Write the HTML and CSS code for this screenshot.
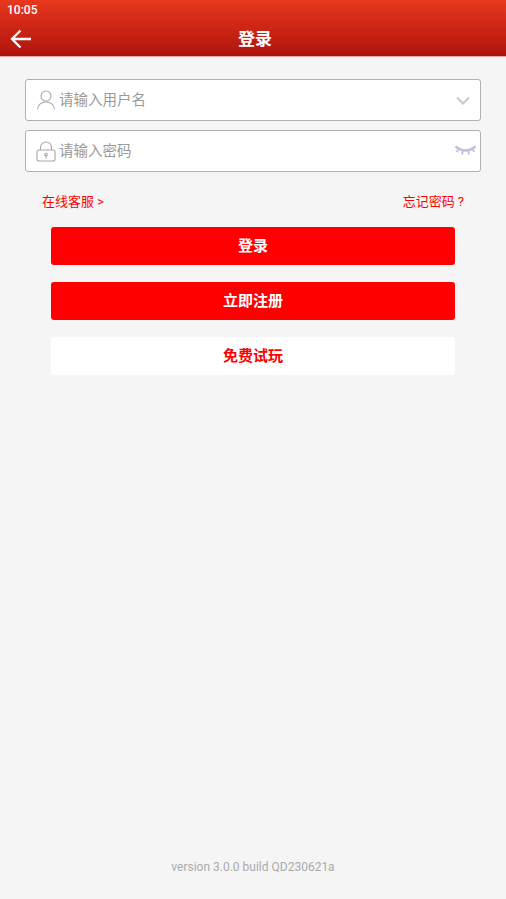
FILE: index.html
```html
<!DOCTYPE html>
<html lang="zh-CN">
<head>
    <meta charset="UTF-8">
    <meta name="viewport" content="width=device-width, initial-scale=1.0">
    <title>登录</title>
    <link rel="stylesheet" href="styles.css">
</head>
<body>
    <header class="topbar">
        <div class="status-time">10:05</div>
        <div class="titlebar">
            <a class="back" href="#" aria-label="返回">
                <svg width="22" height="20" viewBox="0 0 22 20" fill="none" stroke="#fff" stroke-width="2.300">
                    <path d="M21 10H2.500M10.500 1.500L2 10l8.500 8.500"/>
                </svg>
            </a>
            <h1>登录</h1>
        </div>
    </header>

    <main class="login">
        <div class="field">
            <svg class="field-icon" width="20" height="20" viewBox="0 0 20 20" fill="none" stroke="#a8a8a8" stroke-width="1.100">
                <circle cx="10" cy="6" r="5"/>
                <path d="M1.500 19.500c0-4.500 3.500-7.500 8.500-7.500s8.500 3 8.500 7.500"/>
            </svg>
            <input type="text" placeholder="请输入用户名">
            <svg class="arrow" width="14" height="9" viewBox="0 0 14 9" fill="none" stroke="#c8c8c8" stroke-width="2">
                <path d="M1 1.500l6 6 6-6"/>
            </svg>
        </div>
        <div class="field">
            <svg class="field-icon" width="20" height="21" viewBox="0 0 20 21" fill="none" stroke="#a8a8a8" stroke-width="1.100">
                <path d="M4.500 9V6.500a5.500 5.500 0 0 1 11 0V9"/>
                <rect x="1" y="9" width="18" height="11" rx="2"/>
                <circle cx="10" cy="13.500" r="1.300"/>
                <path d="M10 15v2.500"/>
            </svg>
            <input type="password" placeholder="请输入密码">
            <svg class="eye" width="21" height="13" viewBox="0 0 21 13" fill="none" stroke="#c0c0de" stroke-width="2.600">
                <path d="M.5 2.500c3 2.500 6 4 10 4s7-1.500 10-4"/>
                <path stroke-width="1.800" d="M4 5L1.500 8M8 6.500L7 10.500M13 6.500l1 4M17 5l2.500 3"/>
            </svg>
        </div>

        <div class="links">
            <a href="#">在线客服 &gt;</a>
            <a href="#">忘记密码 ?</a>
        </div>

        <div class="buttons">
            <button class="btn">登录</button>
            <button class="btn">立即注册</button>
            <button class="btn btn-white">免费试玩</button>
        </div>
    </main>

    <footer class="version">version 3.0.0 build QD230621a</footer>
</body>
</html>
```

FILE: styles.css
```css
html, body {
    height: 100%;
}
body {
    margin: 0;
    display: flex;
    flex-direction: column;
    background-color: #f5f5f5;
    font-family: Roboto, "Noto Sans CJK SC", sans-serif;
}
.topbar {
    height: 57px;
    box-sizing: border-box;
    background: linear-gradient(to bottom, #e8381e, #b0130c);
    border-bottom: 1px solid #e8a8a4;
    color: #fff;
}
.status-time {
    height: 21px;
    padding: 3px 0 0 7px;
    box-sizing: border-box;
    font-size: 12px;
    font-weight: 500;
    line-height: 15px;
}
.titlebar {
    position: relative;
    height: 35px;
    text-align: center;
}
.titlebar h1 {
    margin: 0;
    padding-left: 4px;
    font-size: 17px;
    font-weight: 700;
    line-height: 36px;
}
.back {
    position: absolute;
    left: 10px;
    top: 8px;
    line-height: 0;
}
.login {
    flex: 1;
    padding: 22px 25px 0;
}
.field {
    display: flex;
    align-items: center;
    height: 42px;
    margin-bottom: 9px;
    padding: 0 4px 0 10px;
    box-sizing: border-box;
    background-color: #fff;
    border: 1px solid #b0b0b0;
    border-radius: 3px;
}
.field input {
    flex: 1;
    min-width: 0;
    margin-left: 3px;
    padding: 0;
    border: 0;
    outline: 0;
    background: none;
    font-family: inherit;
    font-size: 14.500px;
}
.field input::placeholder {
    color: #999;
}
.arrow {
    margin-right: 6px;
}
.eye {
    margin-top: -1px;
}
.links {
    display: flex;
    justify-content: space-between;
    padding: 12px 17px 0 17px;
    font-size: 13px;
    line-height: 18px;
}
.links a {
    color: #f00;
    text-decoration: none;
}
.buttons {
    display: flex;
    flex-direction: column;
    gap: 17px;
    margin-top: 16px;
    padding: 0 26px 0 26px;
}
.btn {
    height: 38px;
    padding: 0 0 3px;
    border: 0;
    border-radius: 3px;
    background-color: #f00;
    color: #fff;
    font-family: inherit;
    font-size: 15px;
    font-weight: 700;
}
.btn-white {
    background-color: #fff;
    color: #f00;
}
.version {
    padding-bottom: 24px;
    color: #aaa;
    font-size: 12px;
    line-height: 16px;
    text-align: center;
}
```
